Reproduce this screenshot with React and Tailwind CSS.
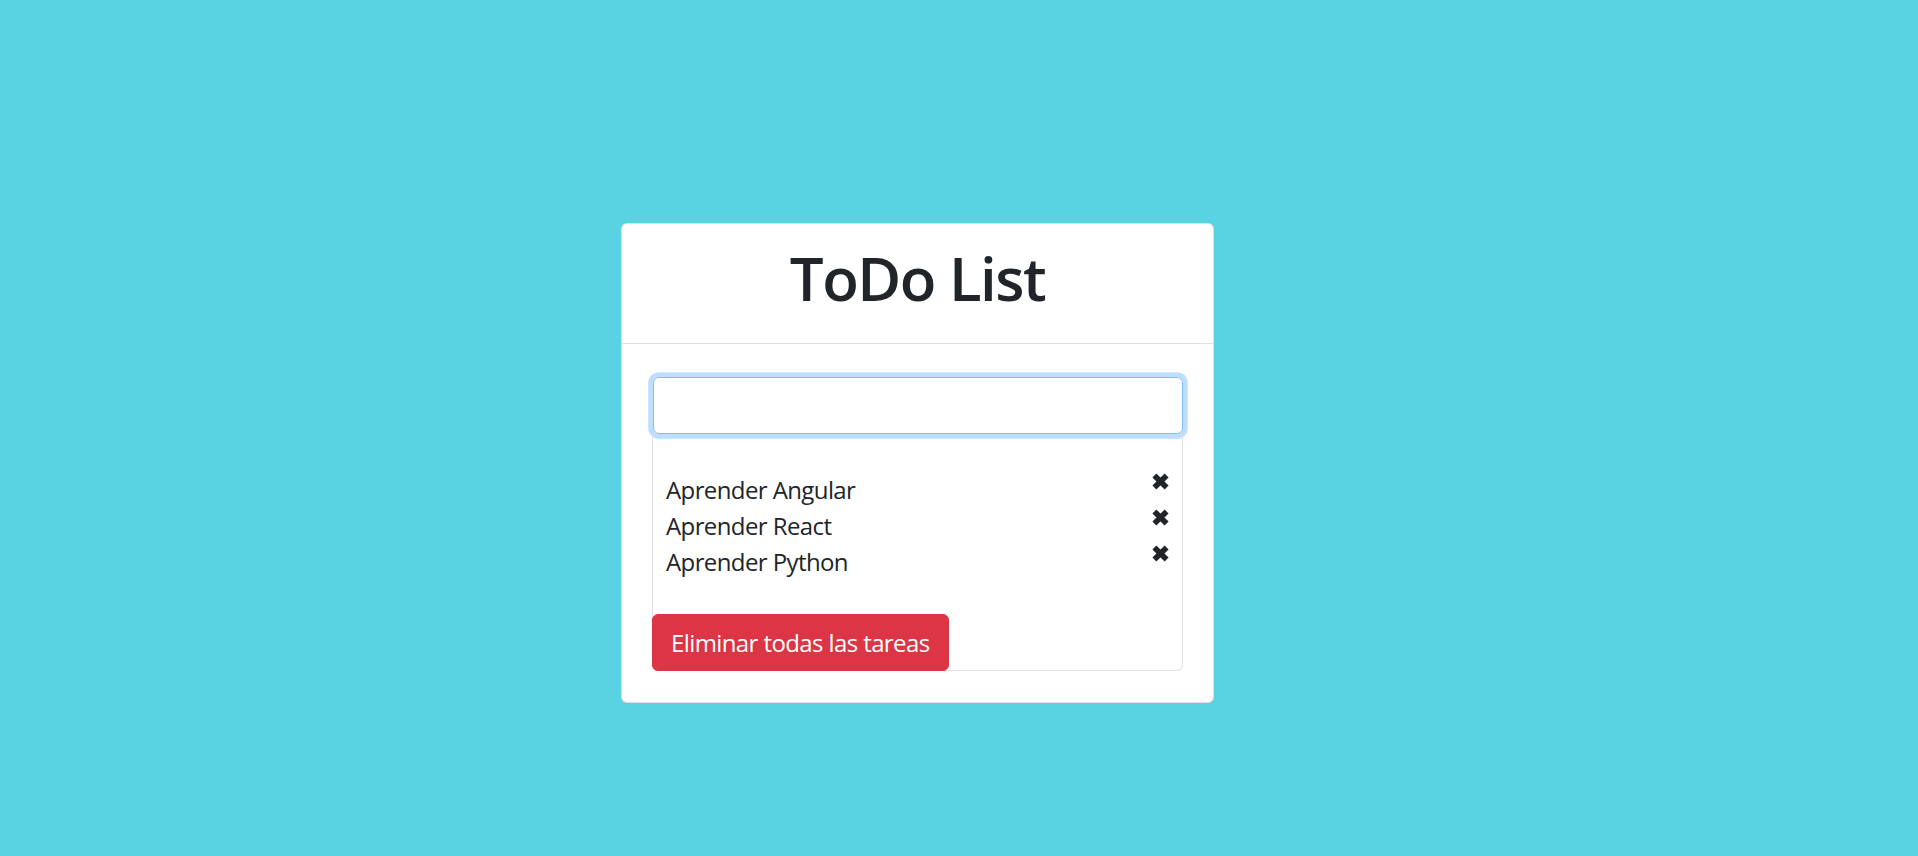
import React from "react";

const tareas = ["Aprender Angular", "Aprender React", "Aprender Python"];

const CloseIcon = () => (
  <svg className="w-[19px] h-[19px]" viewBox="0 0 19 19" fill="none">
    <path d="M3.4 3.4L15.6 15.6M15.6 3.4L3.4 15.6" stroke="#212529" strokeWidth="5.6" strokeLinecap="butt" />
  </svg>
);

export default function App() {
  return (
    <div
      className="min-h-screen w-full bg-[#59d2e2] pt-[223px] text-[#212529]"
      style={{ fontFamily: '"Open Sans", "Noto Sans", sans-serif' }}>
      <div className="ml-[621px] w-[593px] bg-white border border-black/[0.125] rounded-[6px]">
        {/* Header */}
        <div className="h-[120px] border-b border-black/[0.125] pt-[18px] flex justify-center">
          <h1 className="text-[60px] leading-[72px] font-semibold tracking-[-1.5px]">ToDo List</h1>
        </div>

        {/* Body */}
        <div className="px-[30px] pt-[33px] pb-[31px]">
          <input
            type="text"
            className="block w-[530px] mx-px h-[57px] rounded-[6px] border border-[#80bdff] shadow-[0_0_0_4.8px_rgba(0,123,255,0.25)] outline-none px-[18px] text-[24px]"
          />
          <div className="border-x border-b border-[#dee2e6] rounded-b-[6px] pt-[38px]">
            <ul className="pl-[13px] pr-[12px]">
              {tareas.map((t) => (
                <li key={t} className="flex justify-between items-start h-[36px] text-[24px] leading-[36px] tracking-[-0.6px]">
                  <span>{t}</span>
                  <span className="mt-0">
                    <CloseIcon />
                  </span>
                </li>
              ))}
            </ul>
            <button className="mt-[34px] -ml-px -mb-px h-[57px] px-[18px] bg-[#dc3545] text-white text-[24px] rounded-[6px] border border-[#dc3545] tracking-[-0.6px]">
              Eliminar todas las tareas
            </button>
          </div>
        </div>
      </div>
    </div>
  );
}
